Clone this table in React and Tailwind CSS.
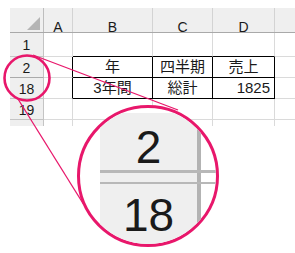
export default function App() {
  const hdr = "shrink-0 border-r border-[#d3d3d3] pt-[12px] text-center text-[14px] leading-[14px]";
  const rowHead = "shrink-0 w-[34px] bg-[#efefef] border-r border-b border-[#c4c4c4] flex items-center justify-center pt-[2px] text-[14px]";
  const cell = "shrink-0 border-r border-b border-[#dadada]";

  return (
    <div className="relative w-[295px] h-[253px] overflow-hidden bg-white text-[#1a1a1a] font-['Liberation_Sans','Noto_Sans_CJK_JP',sans-serif]">
      {/* spreadsheet */}
      <div className="pt-[8px] pl-[10px]">
        <div className="h-[118px] overflow-hidden">
          {/* column header */}
          <div className="flex h-[25px] bg-[#efefef] border-b border-[#a9a9a9]">
            <div className="shrink-0 w-[34px] border-r border-[#bdbdbd] flex items-end justify-end pr-[3px] pb-[2px]">
              <svg width="13" height="13" viewBox="0 0 13 13">
                <polygon points="13,0 13,13 0,13" fill="#b5b5b5" />
              </svg>
            </div>
            <div className={`${hdr} w-[29px]`}>A</div>
            <div className={`${hdr} w-[80px]`}>B</div>
            <div className={`${hdr} w-[60px]`}>C</div>
            <div className={`${hdr} w-[62px]`}>D</div>
            <div className={`${hdr} w-[40px]`}></div>
          </div>

          {/* row 1 */}
          <div className="flex h-[24px]">
            <div className={rowHead}>1</div>
            <div className={`${cell} w-[29px]`}></div>
            <div className="shrink-0 w-[80px] border-r border-[#dadada] border-b border-b-black"></div>
            <div className="shrink-0 w-[60px] border-r border-[#dadada] border-b border-b-black"></div>
            <div className="shrink-0 w-[62px] border-r border-[#dadada] border-b border-b-black"></div>
            <div className={`${cell} w-[40px]`}></div>
          </div>

          {/* row 2 */}
          <div className="flex h-[21px] text-[15px]">
            <div className={`${rowHead} border-b-[#aaaaaa]`}>2</div>
            <div className="shrink-0 w-[29px] border-b border-[#dadada] border-r border-r-black"></div>
            <div className="shrink-0 w-[80px] border-r border-black border-b flex items-center justify-center pt-[1px]">年</div>
            <div className="shrink-0 w-[60px] border-r border-black border-b flex items-center justify-center pt-[1px]">四半期</div>
            <div className="shrink-0 w-[62px] border-r border-black border-b flex items-center justify-center pt-[1px]">売上</div>
            <div className={`${cell} w-[40px]`}></div>
          </div>

          {/* row 18 */}
          <div className="flex h-[21px] text-[15px]">
            <div className={rowHead}>18</div>
            <div className="shrink-0 w-[29px] border-b border-[#dadada] border-r border-r-black"></div>
            <div className="shrink-0 w-[80px] border-r border-b border-black flex items-center justify-center pt-[1px]">3年間</div>
            <div className="shrink-0 w-[60px] border-r border-b border-black flex items-center justify-center pt-[1px]">総計</div>
            <div className="shrink-0 w-[62px] border-r border-b border-black flex items-center justify-end pr-[4px] pt-[1px]">1825</div>
            <div className={`${cell} w-[40px]`}></div>
          </div>

          {/* row 19 */}
          <div className="flex h-[21px]">
            <div className={rowHead}>19</div>
            <div className={`${cell} w-[29px]`}></div>
            <div className={`${cell} w-[80px]`}></div>
            <div className={`${cell} w-[60px]`}></div>
            <div className={`${cell} w-[62px]`}></div>
            <div className={`${cell} w-[40px]`}></div>
          </div>

          {/* row 20 */}
          <div className="flex h-[21px]">
            <div className={rowHead}>20</div>
            <div className={`${cell} w-[29px]`}></div>
            <div className={`${cell} w-[80px]`}></div>
            <div className={`${cell} w-[60px]`}></div>
            <div className={`${cell} w-[62px]`}></div>
            <div className={`${cell} w-[40px]`}></div>
          </div>
        </div>
      </div>

      {/* callout lines and small circle */}
      <svg className="absolute left-0 top-0" width="295" height="253" viewBox="0 0 295 253">
        <line x1="33" y1="55" x2="178" y2="110" stroke="#e8176b" strokeWidth="1.3" />
        <line x1="18" y1="99" x2="84" y2="205" stroke="#e8176b" strokeWidth="1.3" />
        <circle cx="27" cy="78" r="22.5" fill="none" stroke="#e8176b" strokeWidth="2.6" />
      </svg>

      {/* magnifier */}
      <div className="absolute left-[77px] top-[105px] w-[142px] h-[142px] rounded-full border-[3px] border-[#e8176b] bg-white overflow-hidden">
        <div className="flex flex-col pt-[5px] h-full">
          <div className="flex h-[57px] shrink-0">
            <div className="shrink-0 ml-[20px] w-[101px] bg-[#efefef] border-r-[4px] border-[#b3b3b3] flex items-center justify-center pt-[10px] text-[46px] leading-none">2</div>
            <div className="flex-1"></div>
          </div>
          <div className="flex h-[14px] shrink-0 ml-[20px] border-t-[3px] border-b-[2px] border-[#b8b8b8]">
            <div className="shrink-0 w-[101px] bg-[#efefef] border-r-[4px] border-[#b3b3b3]"></div>
            <div className="flex-1"></div>
          </div>
          <div className="flex flex-1">
            <div className="shrink-0 ml-[20px] w-[101px] bg-[#efefef] border-r-[4px] border-[#b3b3b3] flex items-start justify-center pt-[8px] text-[46px] leading-none">18</div>
            <div className="flex-1"></div>
          </div>
        </div>
      </div>
    </div>
  );
}
